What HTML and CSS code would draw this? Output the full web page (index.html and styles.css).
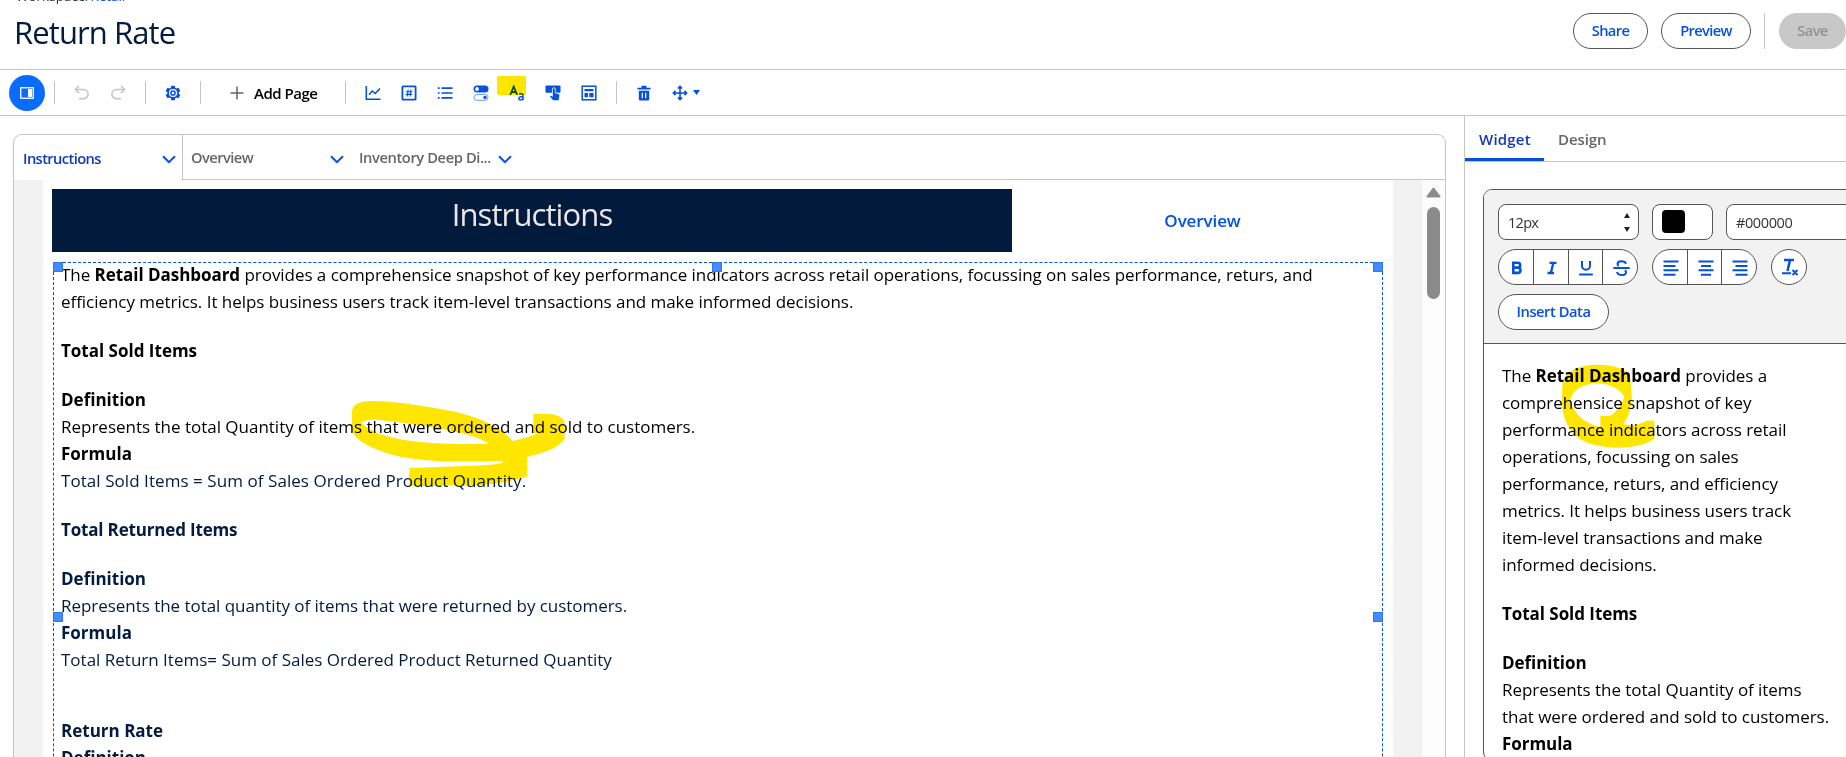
FILE: index.html
```html
<!DOCTYPE html>
<html lang="en">
<head>
<meta charset="utf-8">
<title>Return Rate</title>
<link rel="stylesheet" href="styles.css">
</head>
<body>
<header class="header">
  <div class="heading">
    <div class="crumb">Workspace/<a>Retail</a></div>
    <h1 class="title">Return Rate</h1>
  </div>
  <div class="actions">
    <button class="pill share">Share</button>
    <button class="pill preview">Preview</button>
    <span class="rule tall"></span>
    <button class="pill save">Save</button>
  </div>
</header>

<nav class="toolbar">
  <button class="round"><svg width="14" height="12" viewBox="0 0 14 12"><rect x=".75" y=".75" width="12.5" height="10.5" fill="none" stroke="#fff" stroke-width="1.3"/><rect x="8" y="2" width="4" height="8" fill="#fff"/></svg></button>
  <span class="rule r1"></span>
  <svg class="ic undo" width="16" height="16" viewBox="0 0 16 16" fill="none" stroke="#c6c6c6" stroke-width="1.7"><path d="M5 1 1.5 4.5 5 8M1.5 4.5H9.500a4.600 4.600 0 0 1 0 9.200H5"/></svg>
  <svg class="ic redo" width="16" height="16" viewBox="0 0 16 16" fill="none" stroke="#c6c6c6" stroke-width="1.7"><path d="M11 1 14.5 4.5 11 8M14.500 4.500H6.500a4.600 4.600 0 0 0 0 9.200H11"/></svg>
  <span class="rule r2"></span>
  <svg class="ic gear" width="16" height="16" viewBox="0 0 16 16" fill="#0550dc"><path fill-rule="evenodd" d="M6.200.7h3.600l.5 2.300 1 .6 2.200-.8 1.800 3.100-1.700 1.500v1.200l1.700 1.500-1.800 3.100-2.200-.8-1 .6-.5 2.300H6.200l-.5-2.300-1-.6-2.200.8L.7 10.100l1.700-1.500V7.400L.7 5.900l1.800-3.100 2.200.8 1-.6zM8 3.900a4.100 4.100 0 1 0 0 8.200 4.100 4.100 0 0 0 0-8.200z"/><circle cx="8" cy="8" r="2.100" fill="none" stroke="#0550dc" stroke-width="1.500"/></svg>
  <span class="rule r3"></span>
  <button class="add"><svg width="14" height="14" viewBox="0 0 14 14"><path d="M7 .5v13M.5 7h13" stroke="#666" stroke-width="1.5"/></svg>Add Page</button>
  <span class="rule r4"></span>
  <div class="widgets">
    <svg width="16" height="16" viewBox="0 0 16 16" fill="none" stroke="#0550dc" stroke-width="1.600"><path d="M1.300 1v13.200H15.500M4 9.800l3.200-3.800 3 2.500L15 3.500"/></svg>
    <svg width="16" height="16" viewBox="0 0 16 16" fill="none" stroke="#0550dc"><rect x="1.400" y="1.400" width="13.200" height="13.200" rx=".6" stroke-width="1.800"/><path stroke-width="1.100" d="M7.200 4.500l-1 7M10 4.500l-1 7M4.800 6.700h6.700M4.500 9.400h6.700"/></svg>
    <svg width="16" height="16" viewBox="0 0 16 16" stroke="#0550dc" stroke-width="1.700"><path d="M4.500 3.200h11M4.500 8h11M4.500 12.800h11M.8 3.200h1.800M.8 8h1.800M.8 12.800h1.800"/></svg>
    <svg width="16" height="16" viewBox="0 0 16 16"><rect x=".5" y=".5" width="15" height="7" rx="3.500" fill="#0550dc"/><circle cx="4" cy="4" r="1.900" fill="#fff"/><rect x="1" y="9.500" width="14" height="5.800" rx="2.900" fill="none" stroke="#6b9bf0" stroke-width="1"/><circle cx="12" cy="12.400" r="1.700" fill="#0550dc"/></svg>
    <span class="aa"><svg width="16" height="16" viewBox="0 0 16 16" fill="none" stroke="#0550dc" stroke-width="1.700"><path d="M1.200 10 4.700 1.500 8.200 10M2.400 7.200h4.600" /><path stroke-width="1.500" d="M10 9.200c1.500-.9 4-.7 4 1.300v4.800M14 11.900c-2-.2-4.200 0-4.200 1.600 0 1.900 3.200 1.800 4.200 0"/></svg></span>
    <svg width="16" height="16" viewBox="0 0 16 16" fill="#0550dc"><rect x=".5" y=".5" width="15" height="7.200" rx=".8"/><path stroke="#fff" stroke-width=".8" d="M7.400 4c0-1.700 2.900-1.700 2.900 0v3.800l3.300.9c.9.200 1.200.8 1.100 1.600l-.7 5.400H8.100L4.700 11.600l1.100-1.200 1.600.8z"/></svg>
    <svg width="16" height="16" viewBox="0 0 16 16" fill="#0550dc"><rect x="1.200" y="1.200" width="13.600" height="13.600" fill="none" stroke="#0550dc" stroke-width="1.500"/><path d="M3.500 4h9v2.300h-9zM3.500 8H7v4.200H3.500zM8.300 8h4.200v4.200H8.300z"/></svg>
  </div>
  <span class="rule r5"></span>
  <svg class="ic trash" width="14" height="16" viewBox="0 0 14 16" fill="#0550dc"><path d="M.5 2.800h13v1.800H.5zM4.500.8h5v2h-5zM1.800 5.800h10.400V14c0 .9-.6 1.500-1.500 1.500H3.300c-.9 0-1.500-.6-1.500-1.500z"/><path d="M5.300 7.800v5.400M8.700 7.800v5.400" stroke="#fff" stroke-width="1.200"/></svg>
  <svg class="ic move" width="16" height="16" viewBox="0 0 16 16" fill="none" stroke="#0550dc" stroke-width="1.600"><path d="M8 1.500v13M1.500 8h13M5.900 3.500 8 1.400l2.100 2.100M5.900 12.500 8 14.600l2.100-2.100M3.500 5.900 1.400 8l2.100 2.100M12.500 5.900 14.600 8l-2.100 2.100"/></svg>
  <svg class="ic" width="7" height="5" viewBox="0 0 7 5"><path d="M0 0h7L3.500 5z" fill="#0550dc"/></svg>
</nav>

<div class="workspace">
  <main class="canvas">
    <div class="tabs">
      <div class="tab on">Instructions<svg width="14" height="9" viewBox="0 0 14 9"><path d="M1 1.200 7 7.200l6-6"/></svg></div>
      <div class="tab two">Overview<svg width="14" height="9" viewBox="0 0 14 9"><path d="M1 1.200 7 7.200l6-6"/></svg></div>
      <div class="tab three">Inventory Deep Di...<svg width="14" height="9" viewBox="0 0 14 9"><path d="M1 1.200 7 7.200l6-6"/></svg></div>
    </div>
    <div class="stage">
      <div class="page">
        <div class="top">
          <div class="banner">Instructions</div>
          <a class="link">Overview</a>
        </div>
        <section class="selected">
          <i class="h tl"></i><i class="h tc"></i><i class="h tr"></i><i class="h ml"></i><i class="h mr"></i>
          <p class="t6">The <b>Retail Dashboard</b> provides a comprehensice snapshot of key performance indicators across retail operations, focussing on sales performance, returs, and</p>
          <p class="t5">efficiency metrics. It helps business users track item-level transactions and make informed decisions.</p>
          <p class="gap"><b>Total Sold Items</b></p>
          <p class="gap"><b>Definition</b></p>
          <p class="t2">Represents the total Quantity of items that were ordered and sold to customers.</p>
          <p><b>Formula</b></p>
          <div class="navy">
            <p class="w4">Total Sold Items = Sum of Sales Ordered Product Quantity.</p>
            <p class="gap t15"><b>Total Returned Items</b></p>
            <p class="gap"><b>Definition</b></p>
            <p class="t5">Represents the total quantity of items that were returned by customers.</p>
            <p><b>Formula</b></p>
            <p>Total Return Items= Sum of Sales Ordered Product Returned Quantity</p>
            <p class="gap2"><b>Return Rate</b></p>
            <p><b>Definition</b></p>
          </div>
          <svg class="mark m1" width="260" height="120" viewBox="0 0 780 360"><path fill-rule="evenodd" d="M36 94C38 72 60 63 100 63C170 64 250 78 330 92C400 106 480 135 518 183C545 177 565 170 592 161L580 160V102H630C655 105 672 113 674 130V176C660 200 620 217 562 230V289C530 300 470 314 400 316L208 319V264L400 257C440 256 470 253 487 249V242C350 248 240 245 160 225C90 205 45 180 36 150ZM64 128C80 115 110 117 200 130C300 146 400 160 447 191C350 195 240 190 180 178C120 165 85 150 64 128Z"/></svg>
        </section>
      </div>
      <div class="scroll">
        <svg width="15" height="11" viewBox="0 0 15 11"><path d="M7.500 1.500 13.500 9.500H1.500z" fill="#8b8b8b" stroke="#8b8b8b" stroke-width="2" stroke-linejoin="round"/></svg>
        <div class="thumb"></div>
      </div>
    </div>
  </main>

  <aside class="side">
    <div class="stabs"><span class="stab on">Widget</span><span class="stab">Design</span></div>
    <div class="editor">
      <div class="tools">
        <div class="row">
          <div class="field size">12px<svg width="6" height="19" viewBox="0 0 6 19"><path d="M0 5h6L3 0zM0 14h6l-3 5z" fill="#222"/></svg></div>
          <div class="field swatch"><span></span></div>
          <div class="field hex">#000000</div>
        </div>
        <div class="row">
          <div class="group g4">
            <span><svg width="16" height="16" viewBox="0 0 16 16"><path stroke-width="2.600" d="M4.300 2.700h4.400a2.400 2.400 0 0 1 0 4.900H4.300h5a2.700 2.700 0 0 1 0 5.300h-5z"/></svg></span>
            <span><svg width="16" height="16" viewBox="0 0 16 16"><path stroke-width="2.300" d="M5.500 2.800H12.500M3.500 13H10M9.400 2.600 6.800 13.200"/></svg></span>
            <span><svg width="16" height="16" viewBox="0 0 16 16"><path stroke-width="2" d="M4 1v4.800a4 4 0 0 0 8 0V1M1.200 14.500h13.600"/></svg></span>
            <span><svg width="17" height="18" viewBox="0 0 17 18"><path stroke-width="2" d="M.3 9h16.400M13 4.800C12 1.600 4.800 1.200 4.500 4.800c0 1 .4 1.700 1.200 2.200M4 13c1 4 9.500 4.200 9 .2-.1-1-.5-1.500-1-2"/></svg></span>
          </div>
          <div class="group g3">
            <span><svg width="16" height="16" viewBox="0 0 16 16"><path d="M.5 1.500h15M.5 5.900h12M.5 10.300h15M.5 14.700h12"/></svg></span>
            <span><svg width="16" height="16" viewBox="0 0 16 16"><path d="M.5 1.500h15M3 5.900h10M.5 10.300h15M3 14.700h10"/></svg></span>
            <span><svg width="16" height="16" viewBox="0 0 16 16"><path d="M.5 1.500h15M3.500 5.900h12M.5 10.300h15M3.500 14.700h12"/></svg></span>
          </div>
          <div class="clear"><svg width="18" height="18" viewBox="0 0 18 18"><path stroke-width="2.500" d="M3 2h10M9 2 6.500 13"/><path stroke-width="2" d="M1 15.300h9M11.500 12l5 5M16.500 12l-5 5"/></svg></div>
        </div>
        <div class="row"><button class="pill insert">Insert Data</button></div>
      </div>
      <div class="text">
        <p>The <b>Retail Dashboard</b> provides a</p>
        <p>comprehensice snapshot of key</p>
        <p>performance indicators across retail</p>
        <p>operations, focussing on sales</p>
        <p>performance, returs, and efficiency</p>
        <p>metrics. It helps business users track</p>
        <p>item-level transactions and make</p>
        <p>informed decisions.</p>
        <p class="gap"><b>Total Sold Items</b></p>
        <p class="gap"><b>Definition</b></p>
        <p>Represents the total Quantity of items</p>
        <p>that were ordered and sold to customers.</p>
        <p><b>Formula</b></p>
        <svg class="mark m2" width="110" height="95" viewBox="0 0 330 285"><path fill-rule="evenodd" d="M22 80C28 35 65 14 135 14C185 16 222 30 226 55L231 120C226 155 215 180 205 192C235 200 255 192 275 182H298V237C270 255 230 263 185 263C120 262 75 245 55 220C30 190 21 160 21 120ZM46 120C52 90 85 70 130 70C165 72 195 88 208 110C200 135 185 155 165 168H136V202C100 192 75 175 62 155C52 140 46 130 46 120Z"/></svg>
      </div>
    </div>
  </aside>
</div>
</body>
</html>
```
FILE: styles.css
```css
* { box-sizing: border-box; }
html, body { height: 100%; }
body { margin: 0; overflow: hidden; background: #fff; color: #000; font-family: "Open Sans", "Noto Sans", sans-serif; display: flex; flex-direction: column; }
p, h1 { margin: 0; }
button { font: inherit; border: 0; background: none; padding: 0; }
svg { display: block; flex: none; }

.header { height: 70px; flex: none; display: flex; justify-content: space-between; border-bottom: 1px solid #c6c6c6; }
.heading { padding-left: 14px; }
.crumb { height: 18px; margin: -13px 0 0 2px; font-size: 13.5px; line-height: 18px; color: #333; }
.crumb a { color: #0550dc; }
.title { margin-top: 6px; font-size: 31px; font-weight: 400; line-height: 42px; letter-spacing: -.9px; color: #021b3f; white-space: nowrap; }
.actions { display: flex; padding-top: 13px; }
.pill { height: 36px; border: 1px solid #555; border-radius: 18px; background: #fff; color: #0550dc; font-size: 14.7px; line-height: 32px; padding-bottom: 2px; font-weight: 600; letter-spacing: -.65px; }
.share { width: 75px; margin-right: 13px; }
.preview { width: 90px; margin-right: 13px; }
.save { width: 67px; margin-left: 14px; border: 0; background: #c8c8c8; color: #929292; }
.rule { width: 1px; height: 23px; flex: none; background: #c6c6c6; }
.tall { height: 36px; }

.toolbar { height: 46px; flex: none; display: flex; align-items: center; padding-left: 9px; border-bottom: 1px solid #c6c6c6; }
.round { width: 36px; height: 36px; border-radius: 50%; background: #0a6cff; display: grid; place-items: center; }
.r1 { margin: 0 19px 0 9px; }
.redo { margin-left: 20px; }
.r2 { margin: 0 19px; }
.r3 { margin: 0 29px 0 19px; }
.add { display: flex; align-items: center; gap: 10px; width: 85px; font-size: 15px; font-weight: 600; letter-spacing: -.5px; white-space: nowrap; }
.r4 { margin: 0 19px 0 30px; }
.widgets { display: flex; gap: 20px; }
.r5 { margin: 0 20px 0 19px; }
.trash { margin-right: 21px; }
.move { margin-right: 5px; }
.aa { position: relative; }
.aa::after { content: ""; position: absolute; left: -12px; top: -9px; width: 29px; height: 19px; border-radius: 2px; background: #ffe600; mix-blend-mode: multiply; }

.workspace { flex: 1; min-height: 0; display: flex; }
.canvas { margin: 18px 18px 0 13px; width: 1433px; flex: none; display: flex; flex-direction: column; border: 1px solid #c6c6c6; border-bottom: 0; border-radius: 9px 9px 0 0; }
.tabs { height: 45px; flex: none; display: flex; }
.tabs::after { content: ""; flex: 1; border-bottom: 1px solid #c6c6c6; }
.tab { height: 45px; display: flex; align-items: center; justify-content: space-between; padding: 0 6px 0 9px; font-size: 14.700px; font-weight: 600; color: #666; border-bottom: 1px solid #c6c6c6; white-space: nowrap; }
.tab svg { margin-top: 4px; fill: none; stroke: #0550dc; stroke-width: 2; }
.tab.on { width: 169px; border-right: 1px solid #c6c6c6; border-bottom: 0; color: #1038c0; letter-spacing: -.6px; }
.tab.two { width: 168px; padding: 0 7px 0 8px; letter-spacing: -.55px; }
.tab.three { width: 168px; padding: 0 7px 0 8px; letter-spacing: -.4px; }
.stage { flex: 1; min-height: 0; display: flex; padding-left: 29px; background: #f2f2f2; }
.page { width: 1350px; flex: none; padding: 9px 10px 0 9px; overflow: hidden; background: #fff; }
.top { display: flex; height: 63px; }
.banner { width: 960px; background: #021a3c; color: #ece6e6; text-align: center; font-size: 31px; line-height: 50px; letter-spacing: -.9px; }
.link { flex: 1; margin-left: 10px; text-align: center; font-size: 17px; font-weight: 600; letter-spacing: -.1px; line-height: 63px; color: #0550dc; }
.selected { position: relative; height: 710px; margin: 10px 0 0 1px; width: 1330px; padding-left: 7px; border: 1px dashed #0550dc; }
.selected p:first-of-type { margin-top: -2px; }
p { font-size: 17px; line-height: 27px; white-space: nowrap; }
.selected .navy { color: #021b3f; }
.selected .navy p:first-of-type { margin-top: 0; }
p.gap { margin-top: 22px; }
p.gap2 { margin-top: 44px; }
.t6 { letter-spacing: -.045px; }
.t5 { letter-spacing: -.04px; }
.t2 { letter-spacing: -.01px; }
.t15 { letter-spacing: -.17px; }
.w4 { letter-spacing: .06px; }
.h { position: absolute; width: 10px; height: 10px; background: #438cff; border: 1px solid #2f76e6; }
.tl, .tc, .tr { top: -1px; }
.tl, .ml { left: -1px; }
.tr, .mr { right: -1px; }
.tc { left: 658px; }
.ml, .mr { top: 349px; }
.mark { position: absolute; fill: #ffe600; mix-blend-mode: multiply; }
.m1 { left: 286px; top: 117px; }
.scroll { margin-left: auto; width: 23px; background: #fcfcfc; padding: 7px 0 0 4px; }
.thumb { width: 13px; height: 92px; margin: 9px 0 0 1px; border-radius: 7px; background: #8b8b8b; }

.side { flex: 1; min-width: 0; border-left: 1px solid #c6c6c6; overflow: hidden; }
.stabs { height: 46px; display: flex; border-bottom: 1px solid #c6c6c6; font-size: 15px; font-weight: 600; line-height: 46px; color: #666; }
.stab { padding-left: 14px; letter-spacing: -.1px; }
.stab.on { width: 79px; height: 45px; border-bottom: 3px solid #0550dc; color: #1038c0; letter-spacing: .2px; }
.editor { width: 400px; height: 572px; margin: 27px 0 0 18px; border: 1px solid #555; border-radius: 9px; overflow: hidden; }
.tools { height: 154px; padding: 14px; display: flex; flex-direction: column; gap: 9px; background: #f2f2f2; border-bottom: 1px solid #555; }
.row { display: flex; height: 36px; flex: none; }
.field { height: 36px; display: flex; align-items: center; flex: none; border: 1px solid #555; border-radius: 8px; background: #fff; color: #333; font-size: 14.5px; letter-spacing: -.4px; }
.size { width: 141px; padding: 0 8px 0 9px; justify-content: space-between; margin-right: 13px; letter-spacing: -.7px; }
.swatch { width: 61px; padding-left: 9px; margin-right: 13px; }
.swatch span { width: 23px; height: 23px; margin-top: -1px; border-radius: 4px; background: #000; }
.hex { width: 141px; padding-left: 9px; }
.group, .clear { height: 36px; display: flex; border: 1px solid #555; border-radius: 18px; background: #fff; overflow: hidden; flex: none; }
.group svg, .clear svg { fill: none; stroke: #0550dc; stroke-width: 2; }
.group span { flex: 1; display: grid; place-items: center; padding: 2px 0 0 2px; }
.group span + span { border-left: 1px solid #555; }
.g4 { width: 140px; margin-right: 14px; }
.g3 { width: 105px; margin-right: 14px; }
.clear { width: 36px; align-items: center; justify-content: center; padding-left: 2px; }
.insert { width: 111px; letter-spacing: -.45px; }
.text { position: relative; padding: 18px 0 0 18px; letter-spacing: -.05px; }
.m2 { left: 71px; top: 16px; }
```
